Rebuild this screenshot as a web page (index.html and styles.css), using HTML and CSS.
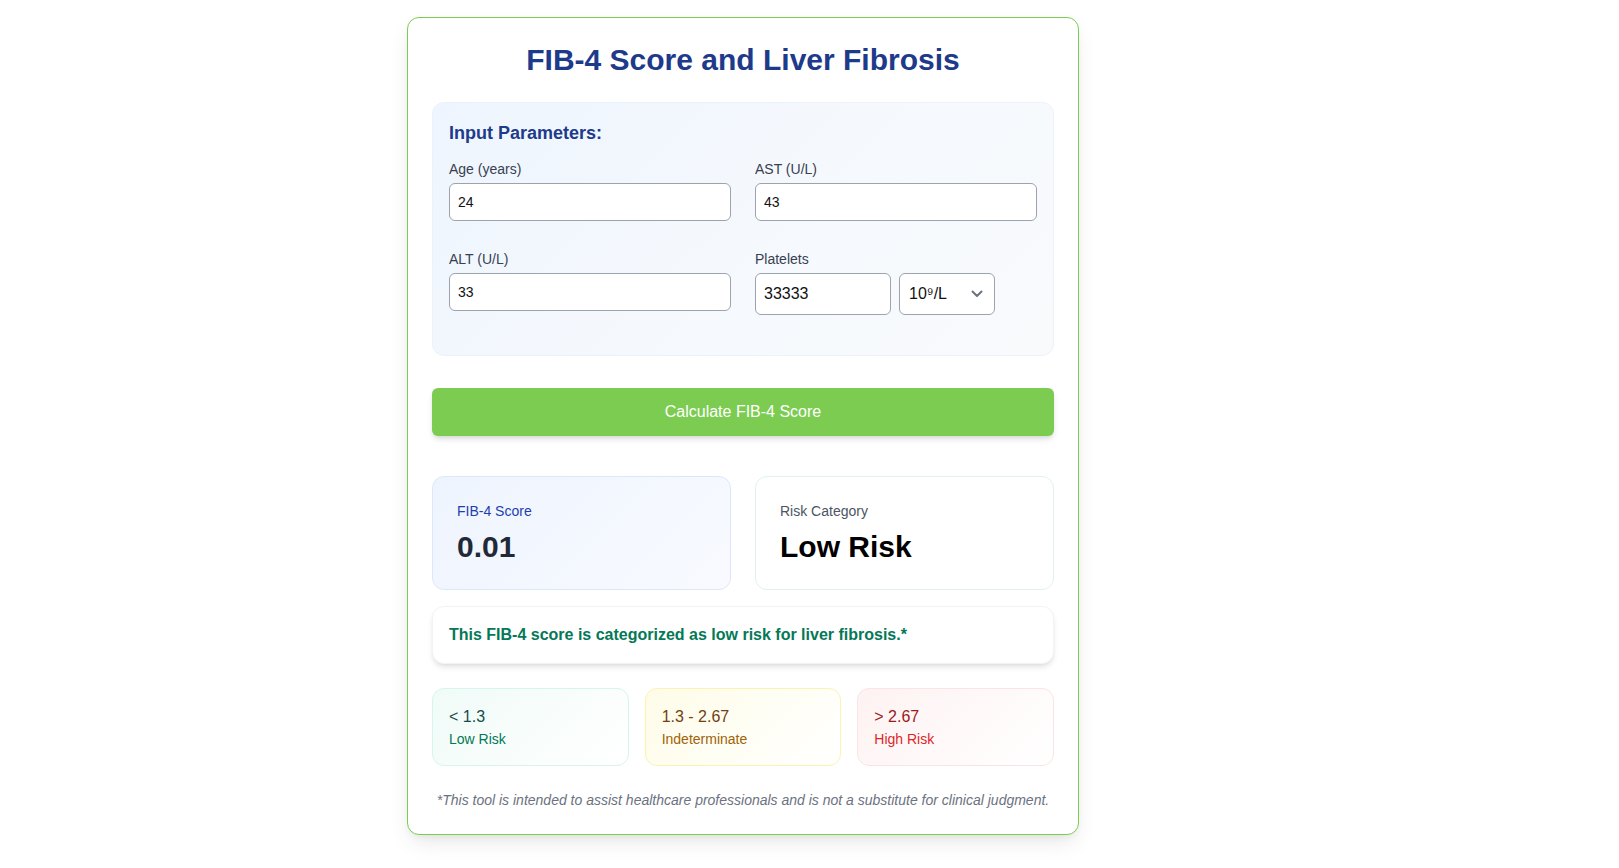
FILE: index.html
```html
<!DOCTYPE html>
<html lang="en">
<head>
<meta charset="utf-8">
<title>FIB-4 Score and Liver Fibrosis</title>
<link rel="stylesheet" href="styles.css">
</head>
<body>
<div class="page">
  <main class="card">
    <h1 class="title">FIB-4 Score and Liver Fibrosis</h1>

    <section class="panel">
      <h2 class="panel-title">Input Parameters:</h2>
      <div class="fields">
        <div class="field">
          <label class="label">Age (years)</label>
          <input class="input" type="text" value="24">
        </div>
        <div class="field">
          <label class="label">AST (U/L)</label>
          <input class="input" type="text" value="43">
        </div>
        <div class="field">
          <label class="label">ALT (U/L)</label>
          <input class="input" type="text" value="33">
        </div>
        <div class="field">
          <label class="label">Platelets</label>
          <div class="platelet-row">
            <input class="input input-lg platelet-input" type="text" value="33333">
            <div class="select">
              <span class="select-text">10⁹/L</span>
              <svg class="chevron" width="12" height="8" viewBox="0 0 12 8"><path d="M1.5 1.5 L6 6 L10.5 1.5" fill="none" stroke="#6b7280" stroke-width="2" stroke-linecap="round" stroke-linejoin="round"/></svg>
            </div>
          </div>
        </div>
      </div>
    </section>

    <button class="calc-btn" type="button">Calculate FIB-4 Score</button>

    <section class="results">
      <div class="result result-score">
        <div class="result-label score-label">FIB-4 Score</div>
        <div class="result-value score-value">0.01</div>
      </div>
      <div class="result result-risk">
        <div class="result-label risk-label">Risk Category</div>
        <div class="result-value risk-value">Low Risk</div>
      </div>
    </section>

    <div class="interp">This FIB-4 score is categorized as low risk for liver fibrosis.*</div>

    <section class="ranges">
      <div class="range range-low">
        <div class="range-val">&lt; 1.3</div>
        <div class="range-name">Low Risk</div>
      </div>
      <div class="range range-mid">
        <div class="range-val">1.3 - 2.67</div>
        <div class="range-name">Indeterminate</div>
      </div>
      <div class="range range-high">
        <div class="range-val">&gt; 2.67</div>
        <div class="range-name">High Risk</div>
      </div>
    </section>

    <p class="footnote">*This tool is intended to assist healthcare professionals and is not a substitute for clinical judgment.</p>
  </main>
</div>
</body>
</html>
```

FILE: styles.css
```css
* { box-sizing: border-box; }

html, body {
  margin: 0;
  padding: 0;
  background: #ffffff;
  font-family: "Liberation Sans", Arial, sans-serif;
  color: #111827;
}

.page {
  padding: 17px 0 30px 407px;
}

.card {
  width: 672px;
  background: #ffffff;
  border: 1px solid #7ccc52;
  border-radius: 12px;
  padding: 24px;
  box-shadow: 0 10px 22px -4px rgba(0, 0, 0, 0.10), 0 4px 8px -4px rgba(0, 0, 0, 0.08);
}

.title {
  margin: 0 0 24px;
  font-size: 30px;
  line-height: 36px;
  font-weight: 700;
  text-align: center;
  color: #1e3a8a;
}

.panel {
  border: 1px solid #edf2f9;
  border-radius: 12px;
  padding: 16px 16px 40px;
  background: linear-gradient(135deg, #eef5fe 0%, #f6f9fd 60%, #f8fafc 100%);
}

.panel-title {
  margin: 0 0 12px;
  font-size: 18px;
  line-height: 28px;
  font-weight: 700;
  color: #1e3a8a;
}

.fields {
  display: grid;
  grid-template-columns: 1fr 1fr;
  column-gap: 24px;
  row-gap: 28px;
  align-items: start;
}

.field {
  display: flex;
  flex-direction: column;
}

.label {
  font-size: 14px;
  line-height: 20px;
  color: #374151;
  margin-bottom: 4px;
}

.input {
  width: 100%;
  font-family: "Liberation Sans", Arial, sans-serif;
  font-size: 14px;
  line-height: 20px;
  padding: 8px 8px;
  border: 1px solid #9ca3af;
  border-radius: 6px;
  background: #ffffff;
  color: #111111;
  outline: none;
}

.input-lg {
  font-size: 16px;
  line-height: 23.5px;
}

.platelet-row {
  display: flex;
  gap: 8px;
}

.platelet-input {
  width: 136px;
}

.select {
  width: 96px;
  height: 41.5px;
  border: 1px solid #9ca3af;
  border-radius: 6px;
  background: #ffffff;
  display: flex;
  align-items: center;
  justify-content: space-between;
  padding: 0 11px 0 9px;
  font-size: 16px;
  color: #111111;
}

.chevron { display: block; }

.calc-btn {
  display: block;
  width: 100%;
  height: 48px;
  margin-top: 32px;
  border: none;
  border-radius: 6px;
  background: #7ccc52;
  color: #ffffff;
  font-family: "Liberation Sans", Arial, sans-serif;
  font-size: 16px;
  box-shadow: 0 4px 6px -1px rgba(0, 0, 0, 0.12), 0 2px 4px -2px rgba(0, 0, 0, 0.10);
}

.results {
  display: grid;
  grid-template-columns: 1fr 1fr;
  gap: 24px;
  margin-top: 40px;
}

.result {
  border-radius: 12px;
  padding: 24px 24px 24px;
}

.result-score {
  border: 1px solid #dde7fb;
  background: linear-gradient(135deg, #eef4fe 0%, #f8faff 100%);
}

.result-risk {
  border: 1px solid #dcf5ea;
  background: #ffffff;
}

.result-label {
  font-size: 14px;
  line-height: 20px;
  margin-bottom: 8px;
}

.score-label { color: #1e40af; }
.risk-label { color: #4b5563; }

.result-value {
  font-size: 30px;
  line-height: 36px;
  font-weight: 700;
}

.score-value { color: #1f2937; }
.risk-value { color: #000000; }

.interp {
  margin-top: 16px;
  border: 1px solid #f1f3f5;
  border-radius: 12px;
  padding: 16px 16px 16px;
  font-size: 16px;
  line-height: 24px;
  font-weight: 700;
  color: #047857;
  background: #ffffff;
  box-shadow: 0 4px 6px -1px rgba(0, 0, 0, 0.10), 0 2px 4px -2px rgba(0, 0, 0, 0.08);
}

.ranges {
  display: grid;
  grid-template-columns: repeat(3, 1fr);
  gap: 16px;
  margin-top: 24px;
}

.range {
  border-radius: 12px;
  padding: 16px 16px;
}

.range-val {
  font-size: 16px;
  line-height: 24px;
}

.range-name {
  font-size: 14px;
  line-height: 20px;
}

.range-low {
  border: 1px solid #d5f5ee;
  background: linear-gradient(135deg, #f0fbf8 0%, #ffffff 100%);
}
.range-low .range-val { color: #134e4a; }
.range-low .range-name { color: #047857; }

.range-mid {
  border: 1px solid #fbf3b0;
  background: linear-gradient(135deg, #fefce8 0%, #ffffff 100%);
}
.range-mid .range-val { color: #713f12; }
.range-mid .range-name { color: #a16207; }

.range-high {
  border: 1px solid #fde3e3;
  background: linear-gradient(135deg, #fef2f2 0%, #ffffff 100%);
}
.range-high .range-val { color: #991b1b; }
.range-high .range-name { color: #dc2626; }

.footnote {
  margin: 24px 0 0;
  font-size: 14px;
  line-height: 20px;
  font-style: italic;
  text-align: center;
  color: #6b7280;
}
```
